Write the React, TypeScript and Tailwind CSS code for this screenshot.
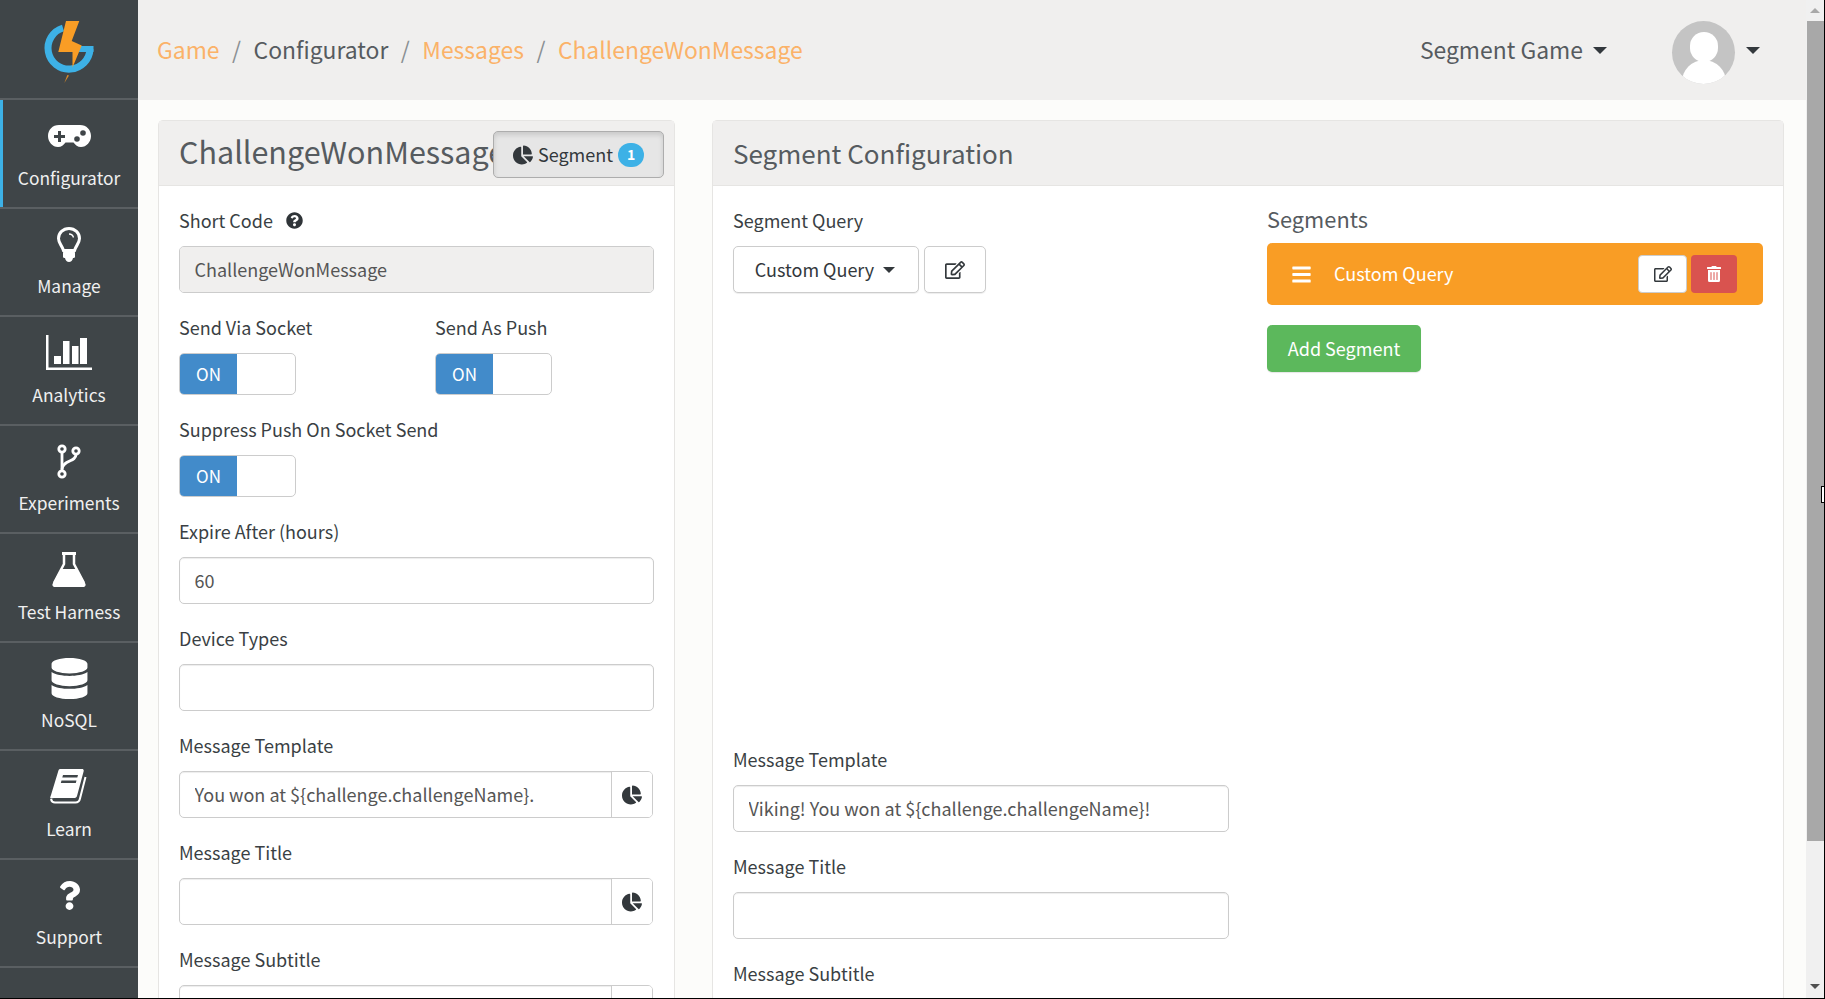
import { FaBars, FaDatabase, FaQuestion, FaQuestionCircle, FaRegEdit, FaChartPie, FaTrashAlt } from "react-icons/fa";

const Logo = () => (
    <svg width="138" height="99" viewBox="0 0 138 99">
        <path d="M63 28A21 21 0 1 0 90 49" fill="none" stroke="#3db1e6" strokeWidth="7" />
        <path d="M80 46H93.500V52H78Z" fill="#3db1e6" />
        <path d="M66 21H79.300L71.700 41L81.700 45.500L72.500 67.500L72.500 52H58.300Z" fill="#f99d25" />
        <path d="M67.300 75L69 75.500L64.300 83Z" fill="#d98a28" />
    </svg>
);

const Gamepad = () => (
    <svg width="43" height="22" viewBox="0 0 43 22">
        <path d="M11 0H32C38.500 0 43 4.800 43 11C43 17 38.500 22 33 22C29.500 22 27.500 20 25.500 17.500H17.500C15.500 20 13.500 22 10 22C4.500 22 0 17 0 11C0 4.800 4.500 0 11 0Z" fill="#fff" />
        <path d="M10 6H13V10H17V13H13V17H10V13H6V10H10Z" fill="#3f4548" />
        <circle cx="29" cy="14" r="2.800" fill="#3f4548" />
        <circle cx="35" cy="8" r="2.800" fill="#3f4548" />
    </svg>
);

const Bulb = () => (
    <svg width="24" height="35" viewBox="0 0 24 35">
        <path d="M12 1.500C6 1.500 1.500 6 1.500 11.500C1.500 16 5 18.500 6.500 23.500H17.500C19 18.500 22.500 16 22.500 11.500C22.500 6 18 1.500 12 1.500Z" fill="none" stroke="#fff" strokeWidth="3" />
        <rect x="6" y="24" width="12" height="7" rx="1.500" fill="#fff" />
        <path d="M8 31H16C15.500 33.500 14 35 12 35C10 35 8.500 33.500 8 31Z" fill="#fff" />
        <path d="M12 7C14 7 16 8.500 16.500 10.500" fill="none" stroke="#fff" strokeWidth="1.300" />
    </svg>
);

const Chart = () => (
    <svg width="46" height="35" viewBox="0 0 46 35" fill="#fff">
        <rect x="0" y="0" width="2.500" height="35" />
        <rect x="0" y="32.500" width="46" height="2.500" />
        <rect x="8" y="21" width="7" height="8" />
        <rect x="17" y="6" width="6.500" height="23" />
        <rect x="26" y="11" width="6.500" height="18" />
        <rect x="34" y="3" width="7" height="26" />
    </svg>
);

const Branch = () => (
    <svg width="24" height="35" viewBox="0 0 24 35" fill="none" stroke="#fff" strokeWidth="2.800">
        <circle cx="5" cy="5" r="3.200" />
        <circle cx="19" cy="7" r="3.200" />
        <circle cx="5" cy="30" r="3.200" />
        <path d="M5 8.500V26.500" />
        <path d="M19 10.500C19 18 6 16 5 25" />
    </svg>
);

const Flask = () => (
    <svg width="34" height="35" viewBox="0 0 34 35">
        <path d="M10 1.500H24" stroke="#fff" strokeWidth="3" />
        <path d="M12 2V12L2 31" fill="none" stroke="#fff" strokeWidth="2.500" />
        <path d="M22 2V12L32 31" fill="none" stroke="#fff" strokeWidth="2.500" />
        <path d="M9 17H25L33.500 32C34 33.500 33 35 31.500 35H2.500C1 35 0 33.500 0.500 32Z" fill="#fff" />
    </svg>
);

const Book = () => (
    <svg width="38" height="35" viewBox="0 0 38 35">
        <path d="M10 0H32C33.500 0 34 1 33.600 2.500L27 27C26.500 28.500 25.500 29 24 29H5C1 29 -1 31 1 26L8 3C8.500 1 9 0 10 0Z" fill="#fff" />
        <path d="M35.500 8L30 29.500C29.500 32 28 33.500 25.500 33.500H5C3 33.500 1.500 32.500 1 30" fill="none" stroke="#fff" strokeWidth="2" />
        <path d="M13 6H28L27.300 8.500H12.300ZM11.500 11.500H26.500L25.800 14H10.800Z" fill="#3f4548" />
    </svg>
);

const Caret = () => <span className="inline-block h-0 w-0 border-x-[7px] border-t-[7px] border-x-transparent border-t-[#33383c]" />;

const Toggle = () => (
    <div className="flex h-[42px] w-[117px] overflow-hidden rounded-[5px] border border-[#ccc] bg-white">
        <div className="flex w-[57px] items-center justify-center bg-[#428bca] text-[17px] text-white">ON</div>
    </div>
);

const Label = ({ text, children }: { text: string; children?: any }) => (
    <div className="mb-[13px] flex h-6 items-center pb-[2px] text-[18px] leading-6 text-[#3a3f44]">
        {text}
        {children}
    </div>
);

const TextInput = ({ value = "", disabled = false, addon = false }: { value?: string; disabled?: boolean; addon?: boolean }) => (
    <div className={`flex h-[47px] overflow-hidden rounded-[5px] border border-[#ccc] bg-white shadow-[inset_0_1px_1px_rgba(0,0,0,0.075)] ${addon ? "w-[474px]" : "w-full"}`}>
        <input
            readOnly
            value={value}
            className={`h-full min-w-0 flex-1 px-[14.500px] pb-[2px] text-[18px] text-[#555] outline-none ${disabled ? "bg-[#f0efee]" : "bg-transparent"}`}
        />
        {addon && (
            <div className="flex w-[41px] items-center justify-center border-l border-[#ccc] bg-white text-[20px] text-[#33383c]">
                <FaChartPie />
            </div>
        )}
    </div>
);

const Field = ({ label, value, addon, disabled }: { label: string; value?: string; addon?: boolean; disabled?: boolean }) => (
    <div className="mb-[23px]">
        <Label text={label} />
        <TextInput value={value} addon={addon} disabled={disabled} />
    </div>
);

const navItems = [
    { name: "Configurator", icon: <Gamepad />, active: true },
    { name: "Manage", icon: <Bulb /> },
    { name: "Analytics", icon: <Chart /> },
    { name: "Experiments", icon: <Branch /> },
    { name: "Test Harness", icon: <Flask /> },
    { name: "NoSQL", icon: <FaDatabase size={41} /> },
    { name: "Learn", icon: <Book /> },
    { name: "Support", icon: <FaQuestion size={29} /> },
];

const Sidebar = () => (
    <aside className="w-[138px] shrink-0 bg-[#3f4548] text-white">
        <div className="h-[100px] border-b-2 border-[#5a5f62]">
            <Logo />
        </div>
        {navItems.map((item) => (
            <div
                key={item.name}
                className={`flex h-[108.500px] flex-col items-center border-b-2 border-[#5a5f62] ${item.active ? "shadow-[inset_3px_0_0_#3db1e6]" : ""}`}
            >
                <div className="flex h-[65.500px] items-center justify-center pt-[6px]">{item.icon}</div>
                <div className="text-[17.400px] leading-[24px] text-[#f0f0f0]">{item.name}</div>
            </div>
        ))}
    </aside>
);

const Header = () => (
    <header className="flex h-[100px] shrink-0 items-center bg-[#f0efee] pl-[19px] pr-[46px] text-[22.900px]">
        <div className="flex pb-[2px]">
            <span className="text-[#fbb268]">Game</span>
            <span className="mx-[12.500px] text-[#8a8f93]">/</span>
            <span className="text-[#565b5f]">Configurator</span>
            <span className="mx-[12.500px] text-[#8a8f93]">/</span>
            <span className="text-[#fbb268]">Messages</span>
            <span className="mx-[12.500px] text-[#8a8f93]">/</span>
            <span className="text-[#fbb268]">ChallengeWonMessage</span>
        </div>
        <div className="ml-auto flex items-center text-[#565b5f]">
            <span className="pb-[2px]">Segment Game</span>
            <span className="ml-[10px] flex"><Caret /></span>
            <div className="relative ml-[65px] mt-[5px] h-[63px] w-[63px] overflow-hidden rounded-full bg-[#c4c4c4]">
                <div className="absolute left-[18px] top-[11px] h-[30px] w-[28px] rounded-full bg-white" />
                <div className="absolute left-[10px] top-[39px] h-[44px] w-[44px] rounded-full bg-white" />
            </div>
            <span className="ml-[11px] flex"><Caret /></span>
        </div>
    </header>
);

const LeftPanel = () => (
    <section className="h-[1000px] w-[517px] shrink-0 rounded-[5px] border border-[#e6e5e3] bg-white">
        <div className="relative flex h-[65px] items-center overflow-hidden border-b border-[#e6e5e3] bg-[#f0efee] pl-5 text-[30.500px] whitespace-nowrap text-[#565b5f]">
            <span className="pb-[2px]">ChallengeWonMessage</span>
            <div className="absolute right-[10px] top-[10px] flex h-[47px] w-[171px] items-center justify-center rounded-[5px] border border-[#adadad] bg-[#e6e6e6] text-[18px] text-[#33383c] shadow-[inset_0_3px_5px_rgba(0,0,0,0.125)]">
                <FaChartPie className="mr-[5px] text-[20px]" />
                Segment
                <span className="ml-[5px] flex h-[24px] w-[26px] items-center justify-center rounded-full bg-[#3db1e6] text-[14px] font-bold text-white">1</span>
            </div>
        </div>
        <div className="px-5 pt-[23px]">
            <div className="mb-[23px]">
                <Label text="Short Code">
                    <FaQuestionCircle className="ml-[13px] text-[17px] text-[#2f3438]" />
                </Label>
                <TextInput value="ChallengeWonMessage" disabled />
            </div>
            <div className="mb-[23px] flex">
                <div className="w-[256px]">
                    <Label text="Send Via Socket" />
                    <Toggle />
                </div>
                <div>
                    <Label text="Send As Push" />
                    <Toggle />
                </div>
            </div>
            <div className="mb-[23px]">
                <Label text="Suppress Push On Socket Send" />
                <Toggle />
            </div>
            <Field label="Expire After (hours)" value="60" />
            <Field label="Device Types" />
            <Field label="Message Template" value="You won at ${challenge.challengeName}." addon />
            <Field label="Message Title" addon />
            <Field label="Message Subtitle" addon />
        </div>
    </section>
);

const RightPanel = () => (
    <section className="h-[1000px] min-w-0 flex-1 rounded-[5px] border border-[#e6e5e3] bg-white">
        <div className="flex h-[65px] items-center border-b border-[#e6e5e3] bg-[#f0efee] pb-[2px] pl-5 text-[26px] text-[#565b5f]">
            Segment Configuration
        </div>
        <div className="flex pl-5 pr-5 pt-[23px]">
            <div className="w-[496px]">
                <Label text="Segment Query" />
                <div className="flex gap-[5px]">
                    <div className="flex h-[47px] w-[186px] items-center justify-center rounded-[5px] border border-[#ccc] bg-white pr-[2px] text-[18px] text-[#33383c] shadow-[0_1px_1px_rgba(0,0,0,0.075)]">
                        Custom Query
                        <span className="ml-[9px] inline-block h-0 w-0 border-x-[6px] border-t-[6px] border-x-transparent border-t-[#33383c]" />
                    </div>
                    <div className="flex h-[47px] w-[62px] items-center justify-center rounded-[5px] border border-[#ccc] bg-white text-[20px] text-[#33383c] shadow-[0_1px_1px_rgba(0,0,0,0.075)]">
                        <FaRegEdit />
                    </div>
                </div>
                <div className="mt-[455px]">
                    <Field label="Message Template" value="Viking! You won at ${challenge.challengeName}!" />
                    <Field label="Message Title" />
                    <Field label="Message Subtitle" />
                </div>
            </div>
            <div className="ml-[38px] min-w-0 flex-1">
                <div className="mb-[10px] h-6 text-[21.800px] leading-5 text-[#565b5f]">Segments</div>
                <div className="flex h-[62px] items-center rounded-[5px] bg-[#f99d25] pl-[24px] pr-[26px] text-[18px] text-white">
                    <FaBars className="text-[21px]" />
                    <span className="ml-[22px] pb-[2px]">Custom Query</span>
                    <div className="ml-auto flex h-[38px] w-[49px] items-center justify-center rounded-[4px] border border-[#ccc] bg-white text-[18px] text-[#33383c]">
                        <FaRegEdit />
                    </div>
                    <div className="ml-[4px] flex h-[38px] w-[46px] items-center justify-center rounded-[4px] bg-[#d9534f] text-[16px] text-white">
                        <FaTrashAlt />
                    </div>
                </div>
                <div className="mt-5 flex h-[47px] w-[154px] items-center justify-center rounded-[5px] bg-[#5cb85c] text-[18px] text-white shadow-[0_1px_1px_rgba(0,0,0,0.1)]">
                    Add Segment
                </div>
            </div>
        </div>
    </section>
);

const Scrollbar = () => (
    <div className="relative flex w-[18px] shrink-0 flex-col items-center bg-[#f0f0f0]">
        <div className="flex h-[21px] items-center justify-center">
            <span className="h-0 w-0 border-x-[5px] border-b-[5px] border-x-transparent border-b-[#a8a8a8]" />
        </div>
        <div className="h-[820px] w-[17px] bg-[#a8a8a8]" />
        <div className="mt-auto flex h-[24px] items-center justify-center">
            <span className="h-0 w-0 border-x-[5px] border-t-[5px] border-x-transparent border-t-[#505050]" />
        </div>
        <div className="absolute right-0 top-[486px] h-[17px] w-[3px] border border-r-0 border-black bg-white" />
    </div>
);

export default function App() {
    return (
        <div className="flex h-[999px] w-[1825px] overflow-hidden border-b border-r border-black bg-[#fcfcfa] [font-family:'Noto_Sans_CJK_JP',sans-serif]">
            <Sidebar />
            <main className="flex min-w-0 flex-1 flex-col">
                <Header />
                <div className="flex gap-[37px] pl-5 pr-[22px] pt-5">
                    <LeftPanel />
                    <RightPanel />
                </div>
            </main>
            <Scrollbar />
        </div>
    );
}
